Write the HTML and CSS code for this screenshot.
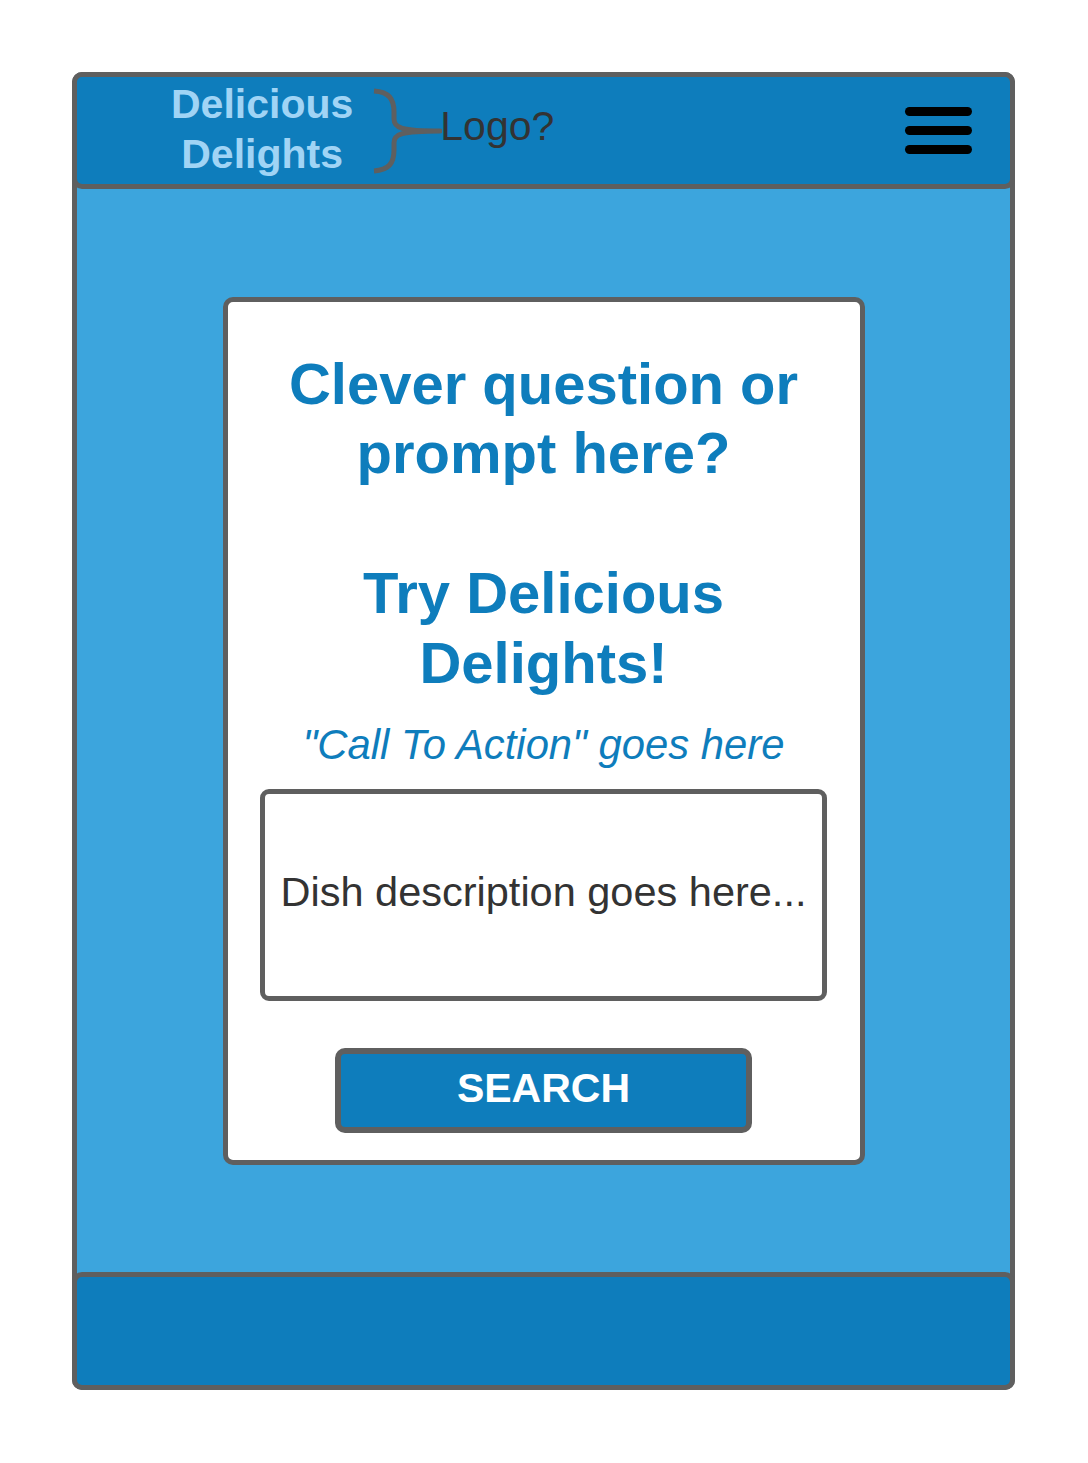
FILE: index.html
```html
<!DOCTYPE html>
<html lang="en">
<head>
<meta charset="utf-8">
<title>Delicious Delights</title>
<link rel="stylesheet" href="styles.css">
</head>
<body>
<div class="frame">
  <header class="topbar">
    <div class="brand">Delicious<br>Delights</div>
    <svg class="brace" width="70" height="86" viewBox="0 0 70 86" aria-hidden="true">
      <path d="M2 3 C17 4 22 11 22 24 L22 31 C22 40 29 43 68 43 C29 43 22 46 22 55 L22 62 C22 75 17 82 2 83" fill="none" stroke="#5f5f5f" stroke-width="5" stroke-linejoin="round"/>
    </svg>
    <span class="logo-note">Logo?</span>
    <div class="burger" aria-label="Menu">
      <span class="bar"></span>
      <span class="bar"></span>
      <span class="bar"></span>
    </div>
  </header>
  <main class="content">
    <section class="card">
      <h1 class="prompt">Clever question or<br>prompt here?</h1>
      <h2 class="prompt prompt-second">Try Delicious<br>Delights!</h2>
      <p class="cta">"Call To Action" goes here</p>
      <div class="dish-input">Dish description goes here...</div>
      <div class="search-btn">SEARCH</div>
    </section>
  </main>
  <footer class="bottombar"></footer>
</div>
</body>
</html>
```

FILE: styles.css
```css
* {
  box-sizing: border-box;
}

html, body {
  margin: 0;
  padding: 0;
  background: #ffffff;
}

body {
  padding: 72px 0 0 72px;
  font-family: "Liberation Sans", Arial, Helvetica, sans-serif;
}

.frame {
  width: 943px;
  height: 1318px;
  border: 5px solid #5f5f5f;
  border-radius: 10px;
  background: #3ca5dd;
  display: flex;
  flex-direction: column;
}

.topbar {
  height: 117px;
  margin: -5px -5px 0 -5px;
  border: 5px solid #5f5f5f;
  border-radius: 10px;
  background: #0e7dbc;
  display: flex;
  align-items: center;
  padding-left: 94px;
  flex: none;
}

.brand {
  color: #a0d4f5;
  font-weight: bold;
  font-size: 41px;
  line-height: 50px;
  text-align: center;
  margin-bottom: 4px;
}

.brace {
  display: block;
  margin-left: 19px;
  flex: none;
}

.logo-note {
  color: #333333;
  font-size: 41px;
  line-height: 48px;
  margin-left: -2px;
  margin-bottom: 9px;
}

.burger {
  margin-left: auto;
  margin-right: 38px;
  display: flex;
  flex-direction: column;
  gap: 10px;
}

.bar {
  display: block;
  width: 67px;
  height: 9px;
  border-radius: 5px;
  background: #000000;
}

.content {
  flex: 1;
  display: flex;
  align-items: center;
  justify-content: center;
}

.card {
  width: 642px;
  background: #ffffff;
  border: 5px solid #5f5f5f;
  border-radius: 10px;
  padding: 47px 0 27px;
  display: flex;
  flex-direction: column;
  align-items: center;
}

.prompt {
  margin: 0;
  color: #0e7dbc;
  font-size: 58px;
  font-weight: bold;
  line-height: 69px;
  text-align: center;
}

.prompt-second {
  margin-top: 71px;
  line-height: 70px;
}

.cta {
  margin: 23px 0 0;
  color: #0e7dbc;
  font-style: italic;
  font-size: 41.8px;
  line-height: 48px;
  text-align: center;
}

.dish-input {
  margin-top: 20px;
  width: 567px;
  height: 212px;
  border: 5px solid #5f5f5f;
  border-radius: 9px;
  display: flex;
  align-items: center;
  justify-content: center;
  color: #333333;
  font-size: 41.5px;
  white-space: nowrap;
  padding-bottom: 6px;
}

.search-btn {
  margin-top: 47px;
  width: 417px;
  height: 85px;
  border: 6px solid #5f5f5f;
  border-radius: 10px;
  background: #0e7dbc;
  color: #ffffff;
  font-weight: bold;
  font-size: 41px;
  display: flex;
  align-items: center;
  justify-content: center;
  padding-bottom: 4px;
}

.bottombar {
  height: 118px;
  margin: 0 -5px -5px -5px;
  border: 5px solid #5f5f5f;
  border-radius: 10px;
  background: #0e7dbc;
  flex: none;
}
```
